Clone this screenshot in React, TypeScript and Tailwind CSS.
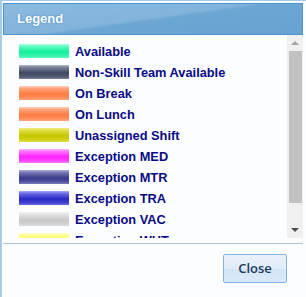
import React from "react";

const items = [
	{ label: "Available", swatch: "bg-[linear-gradient(to_bottom,#b4ffe0_0%,#5cfbbf_18%,#14f09a_55%,#2ef5a8_80%,#5cfbbf_100%)]" },
	{ label: "Non-Skill Team Available", swatch: "bg-[linear-gradient(to_bottom,#b3b8c6_0%,#7a8298_18%,#404a62_55%,#4e5770_80%,#79819a_100%)]" },
	{ label: "On Break", swatch: "bg-[linear-gradient(to_bottom,#ffd2bc_0%,#ffa47a_18%,#ff7c44_55%,#ff8a55_80%,#ffa57c_100%)]" },
	{ label: "On Lunch", swatch: "bg-[linear-gradient(to_bottom,#ffd2bc_0%,#ffa47a_18%,#ff7c44_55%,#ff8a55_80%,#ffa57c_100%)]" },
	{ label: "Unassigned Shift", swatch: "bg-[linear-gradient(to_bottom,#eeee80_0%,#dede40_18%,#c6c600_55%,#cece10_80%,#e0e050_100%)]" },
	{ label: "Exception MED", swatch: "bg-[linear-gradient(to_bottom,#ffb8ff_0%,#ff70ff_18%,#ff22ff_55%,#ff3cff_80%,#ff78ff_100%)]" },
	{ label: "Exception MTR", swatch: "bg-[linear-gradient(to_bottom,#b4b4dc_0%,#7878b8_18%,#3c3c8c_55%,#4a4a9a_80%,#7c7cbc_100%)]" },
	{ label: "Exception TRA", swatch: "bg-[linear-gradient(to_bottom,#a8a8f4_0%,#6a6ae4_18%,#2c2cc4_55%,#3a3ad0_80%,#6c6ce4_100%)]" },
	{ label: "Exception VAC", swatch: "bg-[linear-gradient(to_bottom,#f4f4f4_0%,#e2e2e2_18%,#c8c8c8_55%,#cecece_80%,#dedede_100%)]" },
	{ label: "Exception WHT", swatch: "bg-[linear-gradient(to_bottom,#ffffd0_0%,#ffff90_18%,#ffff60_55%,#ffff70_80%,#ffff98_100%)]" },
];

const App = () => {
	return (
		<div className="w-[306px] h-[297px] bg-[#fbfdff] border-l-2 border-t border-[#a8cbe8] flex flex-col font-['Liberation_Sans',Arial,sans-serif] overflow-hidden">
			<div className="mt-[2px] ml-[1px] mr-[3px] h-[32px] border border-[#4a93cf] bg-[linear-gradient(172deg,#8cbadf_0%,#82b3da_48%,#6ca6d3_52%,#67a2d1_100%)] flex items-center pl-[13px]">
				<span className="text-white font-bold text-[13px] [text-shadow:0_0_2px_#3b7fc0]">Legend</span>
			</div>

			<div className="ml-[1px] mr-[3px] h-[203px] flex">
				<div className="flex-1 overflow-hidden pt-[9px] pl-[16px] flex flex-col gap-[7px]">
					{items.map((it) => (
						<div key={it.label} className="flex items-center h-[14px] shrink-0">
							<div className={`w-[50px] h-[14px] shrink-0 ${it.swatch}`} />
							<span className="ml-[6px] mt-[2px] text-[12.8px] font-bold text-[#0a0a84] leading-none whitespace-nowrap">
								{it.label}
							</span>
						</div>
					))}
				</div>
				<div className="w-[16px] bg-[#f0f0f0] flex flex-col items-center">
					<div className="h-[16px] flex items-center justify-center">
						<div className="w-0 h-0 border-l-[4px] border-r-[4px] border-b-[4px] border-l-transparent border-r-transparent border-b-[#a3a3a3]" />
					</div>
					<div className="w-[13px] h-[152px] bg-[#c1c1c1]" />
					<div className="flex-1 flex items-end justify-center pb-[6px]">
						<div className="w-0 h-0 border-l-[4px] border-r-[4px] border-t-[4px] border-l-transparent border-r-transparent border-t-[#505050]" />
					</div>
				</div>
			</div>

			<div className="mt-[5px] ml-[1px] mr-[3px] border-t border-[#a6c6e2]" />

			<div className="flex justify-end pr-[19px] pt-[10px]">
				<button className="w-[64px] h-[29px] border border-[#7eb4ea] rounded-[2px] bg-[linear-gradient(to_bottom,#e9f2fc_0%,#dfecfa_50%,#d2e4f7_52%,#dae9f8_100%)] text-[13px] text-[#1e395b] font-['Open_Sans',sans-serif] font-semibold">
					Close
				</button>
			</div>
		</div>
	);
};

export default App;
